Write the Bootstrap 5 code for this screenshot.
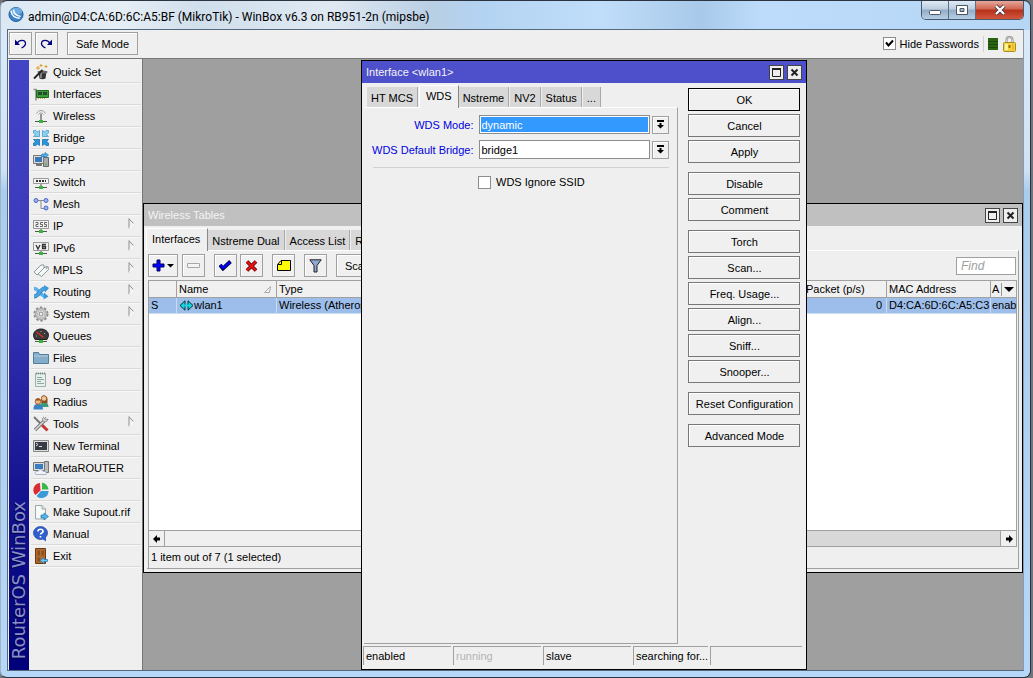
<!DOCTYPE html>
<html lang="en">
<head>
<meta charset="utf-8">
<meta name="viewport" content="width=device-width, initial-scale=1">
<title>WinBox</title>
<link href="https://cdn.jsdelivr.net/npm/bootstrap@5.3.0/dist/css/bootstrap.min.css" rel="stylesheet">
<style>
  body { background: #6f757a; color: #000; font: 11px/16px "Liberation Sans", Arial, sans-serif; }
  button, input, select { font: inherit; color: inherit; }
  a { color: inherit; text-decoration: none; }

  /* outer glass frame */
  .frame { height: 100vh; padding: 0 6px 6px; border: 1px solid #2b3440; border-left-color: #9fb4c8; border-radius: 7px;
    background: linear-gradient(90deg, #dbe8f4 0, #e6eef5 120px, #d0dfec 200px, #dfe9f2 330px, #b9cfe4 430px, #b3d3f2 480px, #c0defa 600px, #a9c9ea 700px, #bddcfb 760px, #b6d6f5 100%) top / 100% 29px no-repeat, linear-gradient(#dcebf8, #cfe3f6 25%, #a9cdee 28%, #b5d7f8); }
  .shell { padding: 0 2px 1px 0; }
  .caption-bar { height: 28px; padding-left: 1px; }
  .caption-text { font: 12px/16px Roboto, "Open Sans", sans-serif; }
  .caption-btns { height: 19px; border: 1px solid #4a5a6c; border-top: 0; border-radius: 0 0 5px 5px; overflow: hidden; }
  .caption-btns button { border: 0; border-right: 1px solid #5c6f84; padding: 0; width: 27px; background: linear-gradient(#dfeaf5, #bccddf 45%, #93abc4 50%, #b6cfe6); display: flex; align-items: center; justify-content: center; }
  .caption-btns .cap-close { width: 47px; border: 0; background: linear-gradient(#e5a99c, #d0644f 45%, #b6301a 50%, #d2573d); }
  .client { border: 1px solid #56697c; border-right-color: #8a9aaa; background: #efefef; min-height: 0; }
  .work-row { min-height: 0; }

  .tool-strip { height: 29px; padding: 2px 7px 3px 1px; border-bottom: 1px solid #777; }
  .flat { border: 1px solid #a0a0a0; background: #f0f0f0; box-shadow: inset 1px 1px #fff; padding: 0; height: 23px; display: inline-flex; align-items: center; justify-content: center; border-radius: 0; white-space: nowrap; line-height: 16px; color: #000; }
  .sq { width: 23px; }
  .near { margin-left: 3px; }
  .far { margin-left: 9px; }
  .wide-flat { width: 71px; }
  .tick { width: 13px; height: 13px; margin: 0; border: 1px solid #8d8d8d; border-radius: 0; background-color: #fff; appearance: none; flex: none; }
  .tick:checked { background: #fff url("data:image/svg+xml,%3Csvg xmlns='http://www.w3.org/2000/svg' viewBox='0 0 11 11'%3E%3Cpath d='M2 4.5 4.5 7.5 9 2.5' fill='none' stroke='%23000' stroke-width='2'/%3E%3C/svg%3E"); }

  .side { width: 135px; padding: 1px 0 0 1px; border-right: 1px solid #777; }
  .brand-strip { width: 20px; background: linear-gradient(#4343c6, #3838b8 35%, #10108c 75%, #00007a); }
  .brand-strip span { writing-mode: vertical-rl; transform: rotate(180deg); font: 18px/20px "DejaVu Sans", sans-serif; color: #8990c8; text-shadow: -1px -1px #000040; padding-top: 11px; }
  .menu-list { padding: 1px 1px 0 2px; }
  .menu-list a { height: 22px; padding-left: 2px; gap: 4px; border-bottom: 1px solid #d9d9d9; box-shadow: 0 1px #f8f8f8; white-space: nowrap; }
  .menu-list svg { flex: none; }
  .menu-list .more { margin: 0 6px 4px auto; }

  .desk { background: #9f9f9f; overflow: hidden; }
  .win { position: absolute; border: 1px solid #000; background: #efefef; }
  .win-title { height: 22px; padding: 0 4px; color: #f4f4f4; }
  .win-title button { width: 15px; height: 15px; border: 1px solid #444; background: #eee; padding: 0; display: flex; align-items: center; justify-content: center; }
  .tables-win { left: 0; right: 0; top: 144px; height: 370px; }
  .tables-win .win-title { background: #c0c0c0; }
  .dialog-win { left: 218px; top: 1px; width: 446px; bottom: 0; }
  .dialog-win .win-title { background: #4d4fcb; }

  .tabs { height: 24px; }
  .tabs button { height: 20px; border: 0; border-right: 1px solid #a8a8a8; margin-right: 1px; background: #d8d8d8; padding: 2px 4px 0; white-space: nowrap; }
  .tabs .on { height: 23px; background: #efefef; border-right-color: #888; border-top: 1px solid #fff; border-left: 1px solid #fff; padding: 0 6px 2px; margin-right: 0; margin-bottom: -1px; position: relative; }
  .tables-win .tabs { padding-left: 2px; }
  .tables-win .tabs .on { padding: 0 7px 2px 5px; }
  .dialog-win .tabs { padding-left: 3px; }
  .pane { border-top: 1px solid #fff; border-right: 1px solid #a0a0a0; border-bottom: 1px solid #a0a0a0; }
  .tables-pane { margin: 0 3px 3px; }

  .tables-tools { padding: 3px 2px 3px 1px; height: 29px; }
  .add-btn { width: 30px; }
  .scan-btn { width: 60px; padding-left: 8px; justify-content: flex-start; }
  .find { width: 60px; height: 18px; border: 1px solid #a0a0a0; padding: 0 4px; font-size: 12px; font-style: italic; background: #fff; }
  .find::placeholder { color: #a0a0a0; opacity: 1; }
  .sheet { background: #fff; border: 1px solid #a0a0a0; margin: 0 1px; }
  .grid-data { width: 100%; table-layout: fixed; border-collapse: separate; border-spacing: 0; }
  .grid-data th { background: #f0f0f0; font-weight: 400; height: 17px; border-bottom: 1px solid #a0a0a0; border-right: 1px solid #a0a0a0; }
  .grid-data td { background: #9dbeea; height: 16px; border-right: 1px solid #c9dbf2; border-bottom: 1px solid #cfdcec; }
  .grid-data th, .grid-data td { padding: 0 0 0 2px; line-height: 15px; white-space: nowrap; }
  .grid-data td:last-child, .grid-data th:last-child { border-right: 0; padding-left: 1px; }
  .col-flag { width: 28px; } .col-name { width: 100px; } .col-pkt { width: 83px; } .col-mac { width: 104px; } .col-auth { width: 25px; }
  .scroll-row { height: 16px; background: #d8d8d8; border: 1px solid #a0a0a0; border-top: 0; margin: 0 1px; }
  .scroll-row button { width: 16px; border: 0; border-right: 1px solid #a0a0a0; padding: 0; background: #f0f0f0; display: flex; align-items: center; justify-content: center; }
  .scroll-row button:last-child { border: 0; border-left: 1px solid #a0a0a0; }
  .thumb { width: 60%; background: #f0f0f0; }
  .tables-status { height: 21px; padding: 2px; border-left: 1px solid #a0a0a0; margin-left: 1px; }

  .tab-side { padding-left: 2px; }
  .form-line { gap: 2px; height: 19px; margin-bottom: 6px; }
  .form-line label { flex: 1; text-align: right; white-space: nowrap; color: #0000e0; padding-right: 4px; }
  .form-line select { appearance: none; flex: none; width: 171px; height: 19px; border: 1px solid #8d8d8d; border-radius: 0; padding: 0 1px; background: #fff; line-height: 16px; }
  .form-line select.picked { background: #3399ff; color: #fff; box-shadow: inset 0 0 0 1px #fff; }
  .form-line .flat { width: 17px; height: 18px; flex: none; }
  .fields { padding: 7px 8px 0; }
  .fields hr { margin: 8px 0 6px 1px; border-top: 1px solid #d2d2d2; opacity: 1; }
  .ignore { padding-left: 106px; gap: 5px; }
  .actions { width: 112px; margin: 5px 7px 0 10px; gap: 3px; }
  .actions .flat { width: 100%; border-color: #777; }
  .actions .first { border: 1px solid #000; }
  .actions .apart { margin-top: 6px; }
  .cells { padding: 2px 4px 4px 1px; gap: 2px; }
  .cells div { height: 19px; width: 88px; border-left: 1px solid #a0a0a0; border-top: 1px solid #a0a0a0; padding: 1px 2px; white-space: nowrap; }
  .cells .short-cell { width: 75px; }
  .cells .dim { color: #b4b4b4; }
</style>
</head>
<body>
<svg width="0" height="0" class="position-absolute">
  <symbol id="more" viewBox="0 0 7 11"><path d="M1 10.5V.5" stroke="#909090" fill="none"/><path d="M1 .8 5.500 5.500" stroke="#909090" fill="none"/><path d="M6 5.500 1 10.500" stroke="#fff" fill="none"/></symbol>
  <symbol id="combo" viewBox="0 0 9 9"><path d="M1 0h7v2H1zM3.500 3h2v2H8L4.500 8.500 1 5h2.500z"/></symbol>
  <symbol id="maxi" viewBox="0 0 11 11"><path d="M1.500 1.500h8v8h-8z" fill="none" stroke="#222"/><path d="M1 2h9" stroke="#222" stroke-width="2"/></symbol>
  <symbol id="shut" viewBox="0 0 11 11"><path d="m2.500 2.500 6 6m0-6-6 6" stroke="#222" stroke-width="2"/></symbol>
</svg>

<div class="shell vh-100">
<div class="frame d-flex flex-column">
  <header class="caption-bar d-flex align-items-start flex-shrink-0">
    <svg class="mt-1 me-1" width="16" height="18" viewBox="0 0 17 18"><circle cx="8.500" cy="9.500" r="7.500" fill="#3a83c8" stroke="#1e5c9a"/><ellipse cx="9" cy="6" rx="6" ry="4" fill="#6eacdf"/><path d="M3 5.500c1 5.500 4 8 9.500 8M6 4.500c0 4.500 3 6.500 7.500 7" fill="none" stroke="#fff" stroke-width="1.500"/></svg>
    <span class="caption-text pt-1 mt-1 flex-grow-1 text-truncate">admin@D4:CA:6D:6C:A5:BF (MikroTik) - WinBox v6.3 on RB951-2n (mipsbe)</span>
    <div class="caption-btns d-flex">
      <button type="button" aria-label="Minimize"><svg width="14" height="14"><rect x="1.500" y="7.500" width="11" height="4" rx="1" fill="#fff" stroke="#4b5663"/></svg></button>
      <button type="button" aria-label="Maximize"><svg width="14" height="14"><path fill-rule="evenodd" d="M1.500 2.500h11v9h-11zM5 5.500v3h4v-3z" fill="#fff" stroke="#4b5663"/></svg></button>
      <button type="button" class="cap-close" aria-label="Close"><svg width="14" height="12"><path d="m3 2 8 8m0-8-8 8" stroke="#4b3d48" stroke-width="4"/><path d="m3 2 8 8m0-8-8 8" stroke="#fff" stroke-width="2.200"/></svg></button>
    </div>
  </header>

  <div class="client d-flex flex-column flex-grow-1">
    <div class="tool-strip d-flex align-items-center">
      <button type="button" class="flat sq" aria-label="Undo"><svg width="13" height="11" fill="none" stroke="#000080" stroke-width="1.300"><path d="M3 5.500c2-4.500 8.500-4 8.500 0 0 2-2 3.500-4 4.500"/><path d="M1 1.500V7h5z" fill="#000080" stroke="none"/></svg></button>
      <button type="button" class="flat sq near" aria-label="Redo"><svg width="13" height="11" fill="none" stroke="#000080" stroke-width="1.300"><path d="M10 5.500c-2-4.500-8.500-4-8.500 0 0 2 2 3.500 4 4.500"/><path d="M12 1.500V7H7z" fill="#000080" stroke="none"/></svg></button>
      <button type="button" class="flat wide-flat far">Safe Mode</button>
      <input class="tick ms-auto" type="checkbox" id="hidepw" checked>
      <label for="hidepw" class="ps-1 pe-1">Hide Passwords</label>
      <svg width="16" height="18" shape-rendering="crispEdges"><path d="M0 1h1v16H0z" fill="#d0d0d0"/><path d="M5 3h10v12H5z" fill="#2c6414"/><path d="M5 6.500h10M5 9.500h10M5 12.500h10" stroke="#1c480a"/></svg>
      <svg class="ms-1" width="13" height="16" viewBox="0 0 13 16"><path d="M3.500 7V4a3 3 0 0 1 6 0v3" fill="none" stroke="#8a8a80" stroke-width="2"/><path d="M3.500 7V4a3 3 0 0 1 6 0v3" fill="none" stroke="#ddd" stroke-width=".8"/><rect x=".5" y="6.500" width="12" height="9" rx="1" fill="#f4d23a" stroke="#a88a28"/><path d="M2 8h3v6H2z" fill="#fff2a0"/><path d="M6.500 9v3" stroke="#a07010" stroke-width="2"/><path d="M10 8v6" stroke="#e0a818"/></svg>
    </div>

    <div class="work-row d-flex flex-grow-1">
      <aside class="side d-flex flex-shrink-0">
        <div class="brand-strip d-flex align-items-end flex-shrink-0"><span class="text-nowrap">RouterOS WinBox</span></div>
        <nav class="menu-list d-flex flex-column flex-grow-1">
          <a href="#" class="d-flex align-items-center"><svg width="16" height="16"><path d="M5.500 7.500h8l-1 7c-2 1-4 1-6 0z" fill="#333"/><ellipse cx="9.500" cy="8" rx="5" ry="1.500" fill="#666"/><path d="M8 9v5" stroke="#999" stroke-width="1.500"/><path d="m1 14.500 9-9" stroke="#222" stroke-width="1.800"/><path d="m9.500 6 2-2" stroke="#eee" stroke-width="2"/><path d="M5 2v4M3 4h4M8 0v3M6.500 1.500h3M13 1v3M11.500 2.500h3" stroke="#dba52a"/></svg>Quick Set</a>
          <a href="#" class="d-flex align-items-center"><svg width="16" height="16"><path d="M.5 3.500H3v11" fill="none" stroke="#8d8d8d" stroke-width="1.500"/><path d="M3.500 4.500h12v7h-12z" fill="#3b9a3b" stroke="#216b25"/><path d="M5 6h4v3H5zM10 6h4v3h-4z" fill="#234d2a"/><path d="M5 12.500h8" stroke="#c8a632" stroke-dasharray="1 1"/></svg>Interfaces</a>
          <a href="#" class="d-flex align-items-center"><svg width="16" height="16"><path d="M3.500 5.500c2-4 7-4 9 0M5.500 6.500c1-2 4-2 5 0" fill="none" stroke="#999"/><path d="M8 6v7" stroke="#777" stroke-width="1.500"/><path d="M2 13.500h12" stroke="#555"/><path d="M6 12h4v3H6z" fill="#35b835"/></svg>Wireless</a>
          <a href="#" class="d-flex align-items-center"><svg width="16" height="16" stroke-width=".7"><path d="M.5.500H3l1.500 1.500L6.500.500v6h-6L2.500 4.500.500 3z" fill="#8cd0f0" stroke="#3d93c9"/><path d="M15.500.500H13l-1.500 1.500L9.500.500v6h6L13.500 4.500l2-1.500z" fill="#8cd0f0" stroke="#3d93c9"/><path d="M.5 15.500H3L4.500 14l2 1.500v-6h-6l2 2-2 1.500z" fill="#2798df" stroke="#14649f"/><path d="M15.500 15.500H13L11.500 14l-2 1.500v-6h6l-2 2 2 1.500z" fill="#2798df" stroke="#14649f"/></svg>Bridge</a>
          <a href="#" class="d-flex align-items-center"><svg width="16" height="16"><path d="M10.500 5.500h5v9h-5z" fill="#aaa" stroke="#666"/><path d="M.5 3.500h10v8H.5z" fill="#ddd" stroke="#777"/><path d="M2 5h7v5H2z" fill="#3a78b8"/><path d="M3 13h6" stroke="#777" stroke-width="2"/><path d="M8 4.500h4V6l3.500-3L12 .5V2H9z" fill="#4db3ec" stroke="#1c6fa8" stroke-width=".6"/><path d="M12 12h2" stroke="#2b2"/></svg>PPP</a>
          <a href="#" class="d-flex align-items-center"><svg width="16" height="16"><path d="M.5 4.500h15v5H.5z" fill="#f4f4f4" stroke="#999"/><path d="M3 7h10" stroke="#333" stroke-width="2" stroke-dasharray="2 1"/><path d="M8 10v3M2 13.500h12" stroke="#555"/><path d="M6 12h4v3H6z" fill="#35b835"/></svg>Switch</a>
          <a href="#" class="d-flex align-items-center"><svg width="16" height="16"><path d="M5 4.500h6M8 4.500v8h3" fill="none" stroke="#8a8a8a"/><g fill="#9cb4f2" stroke="#4c66c4"><circle cx="3" cy="4.500" r="2"/><circle cx="13" cy="4.500" r="2"/><circle cx="13" cy="12" r="2"/></g></svg>Mesh</a>
          <a href="#" class="d-flex align-items-center"><svg width="16" height="16"><path d="M.5 2.500h15v8H.5z" fill="#f2f2f2" stroke="#999"/><path d="M2.500 4.500H5v2H3v2h2.500M10 4.500H7.500v2h2v2H7M14 4.500h-2.500v2h2v2H11" fill="none" stroke="#666"/><path d="M8 11v2M2 13.500h12" stroke="#555"/><path d="M6 12h4v3H6z" fill="#35b835"/></svg>IP<svg class="more" width="7" height="11"><use href="#more"/></svg></a>
          <a href="#" class="d-flex align-items-center"><svg width="16" height="16"><path d="M.5 2.500h15v8H.5z" fill="#f2f2f2" stroke="#999"/><path d="m3 5 2 4 2-4M13 4.500H9.500v4h3v-2h-3" fill="none" stroke="#333" stroke-width="1.300"/><path d="M8 11v2M2 13.500h12" stroke="#555"/><path d="M6 12h4v3H6z" fill="#35b835"/></svg>IPv6<svg class="more" width="7" height="11"><use href="#more"/></svg></a>
          <a href="#" class="d-flex align-items-center"><svg width="16" height="16" fill="#f4f7f7" stroke="#8b9a9a"><path d="m1 10 7-7h3v3l-7 7z"/><path d="m5 12 7-7 3-.5.500 3-7 7z"/><circle cx="13.500" cy="6" r=".6"/></svg>MPLS<svg class="more" width="7" height="11"><use href="#more"/></svg></a>
          <a href="#" class="d-flex align-items-center"><svg width="16" height="16"><path d="M1 4.500c5 0 6 7.500 11 7.500" stroke="#5db2ea" stroke-width="3.500" fill="none"/><path d="M1 12.500c5 0 6-8 11-8" stroke="#2078ba" stroke-width="4" fill="none"/><path d="M1 12.500c5 0 6-8 11-8" stroke="#4aa4e2" stroke-width="2.800" fill="none"/><path d="m11 1 5 3-4 4.500zM11 8.500l4.500 4-5 3z" fill="#3a97d8"/></svg>Routing<svg class="more" width="7" height="11"><use href="#more"/></svg></a>
          <a href="#" class="d-flex align-items-center"><svg width="16" height="16" fill="none"><circle cx="8" cy="8" r="6.500" stroke="#8c8c8c" stroke-width="2" stroke-dasharray="2.500 1.600"/><circle cx="8" cy="8" r="4.500" stroke="#c4c4c4" stroke-width="3"/><circle cx="8" cy="8" r="5.500" stroke="#9a9a9a" stroke-width=".7"/><circle cx="8" cy="8" r="2" fill="#f0f0f0" stroke="#888"/></svg>System<svg class="more" width="7" height="11"><use href="#more"/></svg></a>
          <a href="#" class="d-flex align-items-center"><svg width="16" height="16"><path d="M2 11.500C-2 5 3 1 8 1s10 4 6 10.500z" fill="#3a3a3a" stroke="#222"/><path d="m3.500 4 7 5.500" stroke="#e03028" stroke-width="1.300"/><path d="M3 8h1M8 3v1M12 5l-1 1" stroke="#aaa"/><path d="M2 13.500h12" stroke="#555"/><path d="M6 12h4v3H6z" fill="#35b835"/></svg>Queues</a>
          <a href="#" class="d-flex align-items-center"><svg width="16" height="16"><path d="M.5 13.500v-11h5l1 2h9v9z" fill="#85acc9" stroke="#527e9e"/><path d="M1 6h14" stroke="#b3cfe2"/></svg>Files</a>
          <a href="#" class="d-flex align-items-center"><svg width="16" height="16"><path d="M2.500 1.500h10v13h-10z" fill="#e8f0ee" stroke="#9eb0ac"/><path d="M3 1.500h9" stroke="#7a8c88" stroke-width="2" stroke-dasharray="1 1"/><path d="M4 5.500h5M4 7.500h7M4 9.500h4M4 11.500h7" stroke="#8daaa2"/></svg>Log</a>
          <a href="#" class="d-flex align-items-center"><svg width="16" height="16"><path d="M7 13c0-4 2-5 4-5s4.500 1 4.500 5z" fill="#3e9a78"/><path d="M8 5c-.5-5 6-5 6.500 0v4h-6z" fill="#8c4e22"/><circle cx="11" cy="4.500" r="2.300" fill="#f3c795"/><path d="M.5 15.500c0-5 2-5.500 4.500-5.500s5 .5 5 5.500z" fill="#3a82c8"/><circle cx="5" cy="7.500" r="2.800" fill="#f0b77e" stroke="#98501e" stroke-width=".8"/><path d="M2.300 6.500c.5-3 5-3 5.500 0z" fill="#a0521e"/></svg>Radius</a>
          <a href="#" class="d-flex align-items-center"><svg width="16" height="16" fill="none"><path d="m1 1 8 8" stroke="#777" stroke-width="2"/><path d="m9 9 5.500 5.500" stroke="#c83434" stroke-width="3"/><path d="m2 14 9-9" stroke="#777" stroke-width="3.400"/><path d="m2 14 9-9" stroke="#d4d4d4" stroke-width="1.600"/><path d="M11 1c-2 1-2 4 0 4.500 2 1 4-.5 4-2.500l-2 1-1.500-1L13 1" stroke="#888" fill="#ddd"/></svg>Tools<svg class="more" width="7" height="11"><use href="#more"/></svg></a>
          <a href="#" class="d-flex align-items-center"><svg width="16" height="16"><path d="M.5 2.500h15v11H.5z" fill="#ddd" stroke="#888"/><path d="M2 4h12v8H2z" fill="#383c46"/><path d="m3 5 2 1.500L3 8M6 8.500h3" stroke="#ddd" fill="none"/></svg>New Terminal</a>
          <a href="#" class="d-flex align-items-center"><svg width="16" height="16"><path d="M11.500 1.500h4v11h-4z" fill="#bbb" stroke="#777"/><path d="M.5 2.500h11v8H.5z" fill="#ddd" stroke="#777"/><path d="M2 4h8v5H2z" fill="#3a7cc0"/><path d="M3 14.500c-2-2 0-4 2-3 1-3 5-2 5 0 3-1 4 2 3 3z" fill="#eef4fa" stroke="#96a6b8" stroke-width=".8"/></svg>MetaROUTER</a>
          <a href="#" class="d-flex align-items-center"><svg width="16" height="16"><path d="M7.500 8.500 7 1a7 7 0 0 0-4.500 12z" fill="#d92d33"/><path d="M9 7.500V.8a7 7 0 0 1 6.500 6.700z" fill="#3ab54a"/><path d="M8 9h7.500A7 7 0 0 1 3.500 14z" fill="#3a9ad8"/></svg>Partition</a>
          <a href="#" class="d-flex align-items-center"><svg width="16" height="16"><path d="M2.500 1.500H9l3.500 3.500v10h-10z" fill="#f6faf9" stroke="#99a8a6"/><path d="M9 1.500V5h3.500" fill="#dde6e4" stroke="#99a8a6"/><path d="M8 11h3V9l4.500 3.500L11 16v-2H8z" fill="#55b4ea" stroke="#1d74ae" stroke-width=".7"/></svg>Make Supout.rif</a>
          <a href="#" class="d-flex align-items-center"><svg width="16" height="16"><ellipse cx="7.500" cy="7" rx="7" ry="6.500" fill="#2f5fcc" stroke="#1c3d98" stroke-width=".7"/><path d="m8 12 5 3.500V10z" fill="#2f5fcc"/><path d="M5 5.500c0-3 5-3 5 0C10 7 7.500 7 7.500 8.500M7.500 10v1.500" stroke="#fff" stroke-width="1.700" fill="none"/></svg>Manual</a>
          <a href="#" class="d-flex align-items-center"><svg width="16" height="16"><path d="M2.500.5h10v15h-10z" fill="#b06a30" stroke="#6e3a14"/><path d="M4.500 2.500H7v5H4.500zM8.500 2.500H11v5H8.500zM4.500 9.500H7v4H4.500z" fill="#8c4e1e"/><path d="M14.500 11.500h-3.500v-2l-4 3 4 3v-2h3.500z" fill="#6cc6f2" stroke="#1b75b0" stroke-width=".7"/></svg>Exit</a>
        </nav>
      </aside>

      <main class="desk position-relative flex-grow-1">
        <section class="win tables-win d-flex flex-column">
          <div class="win-title d-flex align-items-center flex-shrink-0"><span class="flex-grow-1">Wireless Tables</span>
            <button type="button" aria-label="Maximize"><svg width="11" height="11"><use href="#maxi"/></svg></button>
            <button type="button" class="near" aria-label="Close"><svg width="11" height="11"><use href="#shut"/></svg></button></div>
          <div class="tabs d-flex align-items-end flex-shrink-0">
            <button type="button" class="on">Interfaces</button><button type="button">Nstreme Dual</button><button type="button">Access List</button><button type="button">R</button>
          </div>
          <div class="pane tables-pane d-flex flex-column flex-grow-1">
            <div class="tables-tools d-flex align-items-center">
              <button type="button" class="flat add-btn" aria-label="Add"><svg width="23" height="13"><path d="M5 1h3v4h4v3H8v4H5V8H1V5h4z" fill="#0000ff" stroke="#000060"/><path d="M15 5h7l-3.500 3.500z"/></svg></button>
              <button type="button" class="flat sq ms-1" aria-label="Remove"><svg width="13" height="5"><path d="M.5.500h12v4H.5z" fill="#f4f4f4" stroke="#a8a8a8"/></svg></button>
              <button type="button" class="flat sq far" aria-label="Enable"><svg width="13" height="11"><path d="m1 5 3 3.500L11.500 1.500" stroke="#000040" stroke-width="3.800" fill="none"/><path d="m1.500 5 2.700 3L11 2" stroke="#0000ff" stroke-width="2.200" fill="none"/></svg></button>
              <button type="button" class="flat sq near" aria-label="Disable"><svg width="13" height="12"><path d="m2 1.500 9 9m0-9-9 9" stroke="#400" stroke-width="3.600"/><path d="m2 1.500 9 9m0-9-9 9" stroke="#f01010" stroke-width="2.200"/></svg></button>
              <button type="button" class="flat sq far" aria-label="Comment"><svg width="14" height="11"><path d="M.5 4.500 4 .5h9.500v10H.5z" fill="#ff0" stroke="#000"/><path d="M1 4.500h3.500V1" fill="none" stroke="#000"/></svg></button>
              <button type="button" class="flat sq far" aria-label="Filter"><svg width="13" height="14"><path d="M.8.800h11.400L8 6.500V13H5V6.500z" fill="#8fa8d0" stroke="#222"/></svg></button>
              <button type="button" class="flat scan-btn far">Sca</button>
              <input class="find ms-auto" type="text" placeholder="Find" aria-label="Find">
            </div>
            <div class="sheet flex-grow-1">
              <table class="grid-data">
                <colgroup><col class="col-flag"><col class="col-name"><col><col class="col-pkt"><col class="col-mac"><col class="col-auth"></colgroup>
                <thead><tr><th></th><th><span class="d-flex align-items-center justify-content-between pe-1">Name<svg width="8" height="7"><path d="M.5 6.500h5L6.500.500z" fill="none" stroke="#aaa"/></svg></span></th><th>Type</th><th>Packet (p/s)</th><th>MAC Address</th><th><span class="d-flex align-items-center justify-content-between">A<svg width="15" height="13"><path d="M.5 0v13" stroke="#999"/><path d="M3 4h10L8 9z"/></svg></span></th></tr></thead>
                <tbody><tr><td>S</td><td><span class="d-flex align-items-center"><svg width="15" height="11" viewBox="0 0 15 11"><path d="M6 .8v9.400L1 5.500zM9 .8v9.400l5-4.700z" fill="#12d6e0" stroke="#003438"/><path d="M3 5.500h9" stroke="#12d6e0" stroke-width="2"/></svg>wlan1</span></td><td>Wireless (Atheros</td><td class="text-end pe-1">0</td><td>D4:CA:6D:6C:A5:C3</td><td>enab</td></tr></tbody>
              </table>
            </div>
            <div class="scroll-row d-flex">
              <button type="button" aria-label="Scroll left"><svg width="8" height="8"><path d="M0 4 4 0v2.500h3v3H4V8z"/></svg></button><div class="thumb"></div>
              <button type="button" class="ms-auto" aria-label="Scroll right"><svg width="8" height="8"><path d="M8 4 4 0v2.500H1v3h3V8z"/></svg></button>
            </div>
            <div class="tables-status">1 item out of 7 (1 selected)</div>
          </div>
        </section>

        <section class="win dialog-win d-flex flex-column">
          <div class="win-title d-flex align-items-center flex-shrink-0"><span class="flex-grow-1">Interface &lt;wlan1&gt;</span>
            <button type="button" aria-label="Maximize"><svg width="11" height="11"><use href="#maxi"/></svg></button>
            <button type="button" class="near" aria-label="Close"><svg width="11" height="11"><use href="#shut"/></svg></button></div>
          <div class="d-flex flex-grow-1">
            <div class="tab-side d-flex flex-column flex-grow-1">
              <div class="tabs d-flex align-items-end">
                <button type="button">HT MCS</button><button type="button" class="on">WDS</button><button type="button">Nstreme</button><button type="button">NV2</button><button type="button">Status</button><button type="button">...</button>
              </div>
              <form class="pane flex-grow-1 fields">
                <div class="form-line d-flex align-items-center"><label for="mode">WDS Mode:</label><select id="mode" class="picked"><option>dynamic</option></select><button type="button" class="flat" aria-label="Open WDS Mode"><svg width="9" height="9"><use href="#combo"/></svg></button></div>
                <div class="form-line d-flex align-items-center"><label for="bridge">WDS Default Bridge:</label><select id="bridge"><option>bridge1</option></select><button type="button" class="flat" aria-label="Open WDS Default Bridge"><svg width="9" height="9"><use href="#combo"/></svg></button></div>
                <hr>
                <div class="ignore d-flex align-items-center"><input class="tick" type="checkbox" id="ssid"><label for="ssid">WDS Ignore SSID</label></div>
              </form>
            </div>
            <div class="actions d-flex flex-column flex-shrink-0">
              <button type="button" class="flat first">OK</button>
              <button type="button" class="flat">Cancel</button>
              <button type="button" class="flat">Apply</button>
              <button type="button" class="flat apart">Disable</button>
              <button type="button" class="flat">Comment</button>
              <button type="button" class="flat apart">Torch</button>
              <button type="button" class="flat">Scan...</button>
              <button type="button" class="flat">Freq. Usage...</button>
              <button type="button" class="flat">Align...</button>
              <button type="button" class="flat">Sniff...</button>
              <button type="button" class="flat">Snooper...</button>
              <button type="button" class="flat apart">Reset Configuration</button>
              <button type="button" class="flat apart">Advanced Mode</button>
            </div>
          </div>
          <div class="cells d-flex"><div>enabled</div><div class="dim">running</div><div>slave</div><div class="short-cell">searching for...</div><div class="flex-grow-1"></div></div>
        </section>
      </main>
    </div>
  </div>
</div>
</div>
<script src="https://cdn.jsdelivr.net/npm/bootstrap@5.3.0/dist/js/bootstrap.bundle.min.js"></script>
</body>
</html>
